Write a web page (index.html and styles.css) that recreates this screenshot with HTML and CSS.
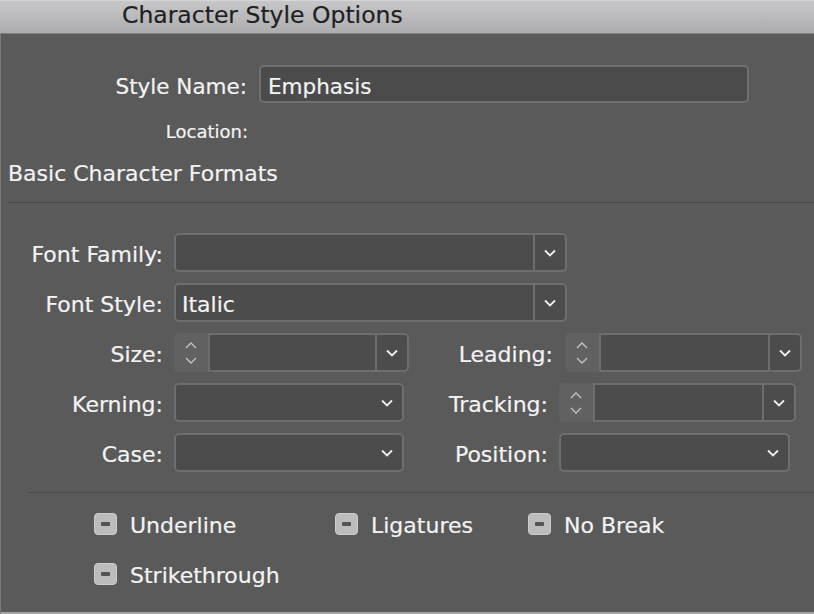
FILE: index.html
```html
<!DOCTYPE html>
<html lang="en">
<head>
<meta charset="utf-8">
<title>Character Style Options</title>
<link rel="stylesheet" href="styles.css">
</head>
<body>
<div class="window">
  <div class="titlebar"><span class="title">Character Style Options</span></div>
  <div class="content">
    <div class="name-row">
      <span class="name-label">Style Name:</span>
      <div class="textfield"><span class="txt">Emphasis</span></div>
    </div>
    <div class="loc-row">Location:</div>
    <div class="section-title">Basic Character Formats</div>
    <div class="sep"></div>

    <div class="form">
      <div class="row">
        <span class="lbl">Font Family:</span>
        <div class="select w-wide">
          <div class="value"></div>
          <div class="btn"><svg width="12" height="8" viewBox="0 0 12 8"><polyline points="1,1.5 6,6.5 11,1.5" fill="none" stroke="#f0f0f0" stroke-width="1.8"/></svg></div>
        </div>
      </div>
      <div class="row">
        <span class="lbl">Font Style:</span>
        <div class="select w-wide">
          <div class="value"><span class="txt">Italic</span></div>
          <div class="btn"><svg width="12" height="8" viewBox="0 0 12 8"><polyline points="1,1.5 6,6.5 11,1.5" fill="none" stroke="#f0f0f0" stroke-width="1.8"/></svg></div>
        </div>
      </div>
      <div class="row">
        <span class="lbl">Size:</span>
        <div class="combo w-combo-s">
          <div class="stepper">
            <svg width="12" height="7" viewBox="0 0 12 7"><polyline points="1,6 6,1 11,6" fill="none" stroke="#c4c4c4" stroke-width="1.3"/></svg>
            <svg width="12" height="7" viewBox="0 0 12 7"><polyline points="1,1 6,6 11,1" fill="none" stroke="#c4c4c4" stroke-width="1.3"/></svg>
          </div>
          <div class="select joined">
            <div class="value"></div>
            <div class="btn"><svg width="12" height="8" viewBox="0 0 12 8"><polyline points="1,1.5 6,6.5 11,1.5" fill="none" stroke="#f0f0f0" stroke-width="1.8"/></svg></div>
          </div>
        </div>
        <span class="lbl2 lbl2-lead">Leading:</span>
        <div class="combo w-combo-r">
          <div class="stepper">
            <svg width="12" height="7" viewBox="0 0 12 7"><polyline points="1,6 6,1 11,6" fill="none" stroke="#c4c4c4" stroke-width="1.3"/></svg>
            <svg width="12" height="7" viewBox="0 0 12 7"><polyline points="1,1 6,6 11,1" fill="none" stroke="#c4c4c4" stroke-width="1.3"/></svg>
          </div>
          <div class="select joined">
            <div class="value"></div>
            <div class="btn"><svg width="12" height="8" viewBox="0 0 12 8"><polyline points="1,1.5 6,6.5 11,1.5" fill="none" stroke="#f0f0f0" stroke-width="1.8"/></svg></div>
          </div>
        </div>
      </div>
      <div class="row">
        <span class="lbl">Kerning:</span>
        <div class="select w-narrow">
          <div class="value"></div>
          <div class="btn plain"><svg width="12" height="8" viewBox="0 0 12 8"><polyline points="1,1.5 6,6.5 11,1.5" fill="none" stroke="#f0f0f0" stroke-width="1.8"/></svg></div>
        </div>
        <span class="lbl2">Tracking:</span>
        <div class="combo w-combo-r">
          <div class="stepper">
            <svg width="12" height="7" viewBox="0 0 12 7"><polyline points="1,6 6,1 11,6" fill="none" stroke="#c4c4c4" stroke-width="1.3"/></svg>
            <svg width="12" height="7" viewBox="0 0 12 7"><polyline points="1,1 6,6 11,1" fill="none" stroke="#c4c4c4" stroke-width="1.3"/></svg>
          </div>
          <div class="select joined">
            <div class="value"></div>
            <div class="btn"><svg width="12" height="8" viewBox="0 0 12 8"><polyline points="1,1.5 6,6.5 11,1.5" fill="none" stroke="#f0f0f0" stroke-width="1.8"/></svg></div>
          </div>
        </div>
      </div>
      <div class="row">
        <span class="lbl">Case:</span>
        <div class="select w-narrow">
          <div class="value"></div>
          <div class="btn plain"><svg width="12" height="8" viewBox="0 0 12 8"><polyline points="1,1.5 6,6.5 11,1.5" fill="none" stroke="#f0f0f0" stroke-width="1.8"/></svg></div>
        </div>
        <span class="lbl2">Position:</span>
        <div class="select w-pos">
          <div class="value"></div>
          <div class="btn plain"><svg width="12" height="8" viewBox="0 0 12 8"><polyline points="1,1.5 6,6.5 11,1.5" fill="none" stroke="#f0f0f0" stroke-width="1.8"/></svg></div>
        </div>
      </div>
    </div>

    <div class="sep sep-inset"></div>

    <div class="checks">
      <div class="check-row">
        <div class="check c1"><span class="cb"></span><span class="txt">Underline</span></div>
        <div class="check c2"><span class="cb"></span><span class="txt">Ligatures</span></div>
        <div class="check"><span class="cb"></span><span class="txt">No Break</span></div>
      </div>
      <div class="check-row">
        <div class="check c1"><span class="cb"></span><span class="txt">Strikethrough</span></div>
      </div>
    </div>
  </div>
</div>
</body>
</html>
```

FILE: styles.css
```css
html, body {
  margin: 0;
  padding: 0;
  background: #5a5a5a;
}

.window {
  width: 814px;
  height: 614px;
  box-sizing: border-box;
  background: #5a5a5a;
  box-shadow: inset 1px 0 0 #7a7a7a, inset 0 -2px 0 #a4a4a4;
  overflow: hidden;
  font-family: "DejaVu Sans", "Liberation Sans", sans-serif;
  color: #f3f3f3;
  -webkit-text-stroke: 0.2px #f3f3f3;
}

.titlebar {
  height: 34px;
  box-sizing: border-box;
  border-bottom: 1px solid #7e7e80;
  border-top: 1px solid #d6d6d8;
  background: linear-gradient(#c7c7c9, #adadaf);
  padding-left: 122px;
  padding-bottom: 3px;
  display: flex;
  align-items: center;
}

.title {
  font-size: 23.5px;
  line-height: 1;
  color: #1f1f1f;
  -webkit-text-stroke: 0.2px #1f1f1f;
}

.content {
  padding-top: 31px;
}

.name-row {
  display: flex;
  align-items: center;
  height: 38px;
}

.name-label {
  width: 247px;
  margin-right: 12px;
  text-align: right;
  font-size: 21.5px;
  padding-top: 4px;
}

.textfield {
  width: 490px;
  height: 38px;
  box-sizing: border-box;
  border: 2px solid #707070;
  border-radius: 5px;
  background: #4b4b4b;
  padding-left: 7px;
  font-size: 21.5px;
  display: flex;
  align-items: center;
}

.txt {
  padding-top: 4px;
}

.loc-row {
  margin-top: 17px;
  width: 248px;
  text-align: right;
  font-size: 18px;
  line-height: 22px;
  padding-top: 1px;
}

.section-title {
  margin-top: 17px;
  padding-left: 8px;
  font-size: 22px;
  line-height: 26px;
  padding-top: 1px;
}

.sep {
  margin: 15px 0 0 8px;
  height: 1px;
  background: #4a4a4a;
}

.sep-inset {
  margin: 20px 0 0 28px;
}

.form {
  margin-top: 30px;
  display: flex;
  flex-direction: column;
  gap: 11px;
}

.row {
  display: flex;
  align-items: center;
  height: 39px;
}

.lbl {
  width: 163px;
  margin-right: 11px;
  text-align: right;
  font-size: 22px;
  padding-top: 4px;
}

.lbl2 {
  width: 144px;
  margin-right: 11px;
  text-align: right;
  font-size: 22px;
  padding-top: 4px;
}

.lbl2-lead {
  margin-right: 12px;
}

.select {
  display: flex;
  height: 39px;
  box-sizing: border-box;
  border: 2px solid #6e6e6e;
  border-radius: 5px;
  background: #4c4c4c;
}

.select .value {
  flex: 1;
  padding-left: 6px;
  display: flex;
  align-items: center;
  font-size: 22px;
}

.select .btn {
  width: 32px;
  box-sizing: border-box;
  border-left: 2px solid #6e6e6e;
  display: flex;
  align-items: center;
  justify-content: center;
}

.select .btn.plain {
  border-left: 0;
  width: 31px;
}

.w-wide { width: 393px; }
.w-narrow { width: 230px; }
.w-pos { width: 231px; }
.w-combo-s { width: 235px; }
.w-combo-r { width: 237px; }

.combo {
  display: flex;
  height: 39px;
}

.stepper {
  width: 34px;
  flex: none;
  background: #616161;
  border-radius: 5px 0 0 5px;
  display: flex;
  flex-direction: column;
  align-items: center;
  justify-content: center;
  gap: 8px;
}

.select.joined {
  flex: 1;
  border-radius: 0 5px 5px 0;
}

.checks {
  margin-top: 18px;
  padding-left: 94px;
  display: flex;
  flex-direction: column;
  gap: 24px;
}

.check-row {
  display: flex;
  height: 26px;
}

.check {
  display: flex;
  align-items: center;
  gap: 13px;
  font-size: 22px;
}

.check .txt {
  padding-top: 2px;
}

.c1 { width: 241px; }
.c2 { width: 193px; }

.cb {
  width: 23px;
  height: 22px;
  box-sizing: border-box;
  border-radius: 4px;
  background: #bcbcbc;
  border: 1px solid #cdcdcd;
  display: flex;
  align-items: center;
  justify-content: center;
  flex: none;
}

.cb::after {
  content: "";
  width: 9px;
  height: 4px;
  border-radius: 1px;
  background: #545454;
}
```
